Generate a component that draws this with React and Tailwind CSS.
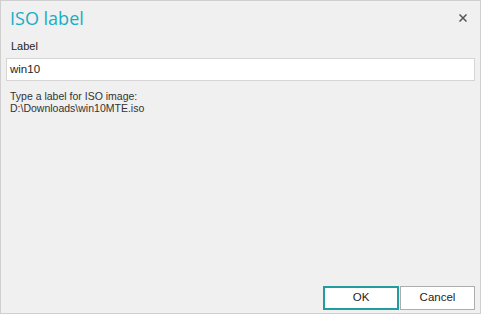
import React from "react";

export default function App() {
  return (
    <div
      className="w-[481px] h-[314px] bg-[#f0f0f0] border border-[#cfcfcf] flex flex-col text-[#1e1e1e]"
      style={{ fontFamily: '"Liberation Sans", Arial, sans-serif' }}
    >
      <div className="flex items-start justify-between pl-[9px] pr-[13px] pt-[5px]">
        <div className="text-[18px] leading-[24px] text-[#16aec6]" style={{ fontFamily: '"Open Sans", "Liberation Sans", sans-serif' }}>
          ISO label
        </div>
        <svg width="8" height="8" viewBox="0 0 8 8" className="mt-[8px]">
          <path d="M0.5 0.5 L7.5 7.5 M7.5 0.5 L0.5 7.5" stroke="#555" strokeWidth="1.5" />
        </svg>
      </div>
      <div className="px-[5px] pt-[9px] flex flex-col">
        <div className="pl-[5px] text-[11px] leading-[14px]">Label</div>
        <div className="mt-[5px] h-[23px] bg-white border border-[#d5d5d5] flex items-center pl-[3px] text-[11.5px]">
          win10
        </div>
        <div className="mt-[9px] pl-[4px] text-[10.5px] leading-[12px] text-[#333]">
          <div>Type a label for ISO image:</div>
          <div>D:\Downloads\win10MTE.iso</div>
        </div>
      </div>
      <div className="flex-1" />
      <div className="flex justify-end gap-[1px] pr-[5px] pb-[3px]">
        <button className="w-[76px] h-[24px] bg-white border-2 border-[#239ca0] text-[11.5px] text-[#1e1e1e]">
          OK
        </button>
        <button className="w-[75px] h-[24px] bg-white border border-[#adadad] text-[11.5px] text-[#1e1e1e]">
          Cancel
        </button>
      </div>
    </div>
  );
}
